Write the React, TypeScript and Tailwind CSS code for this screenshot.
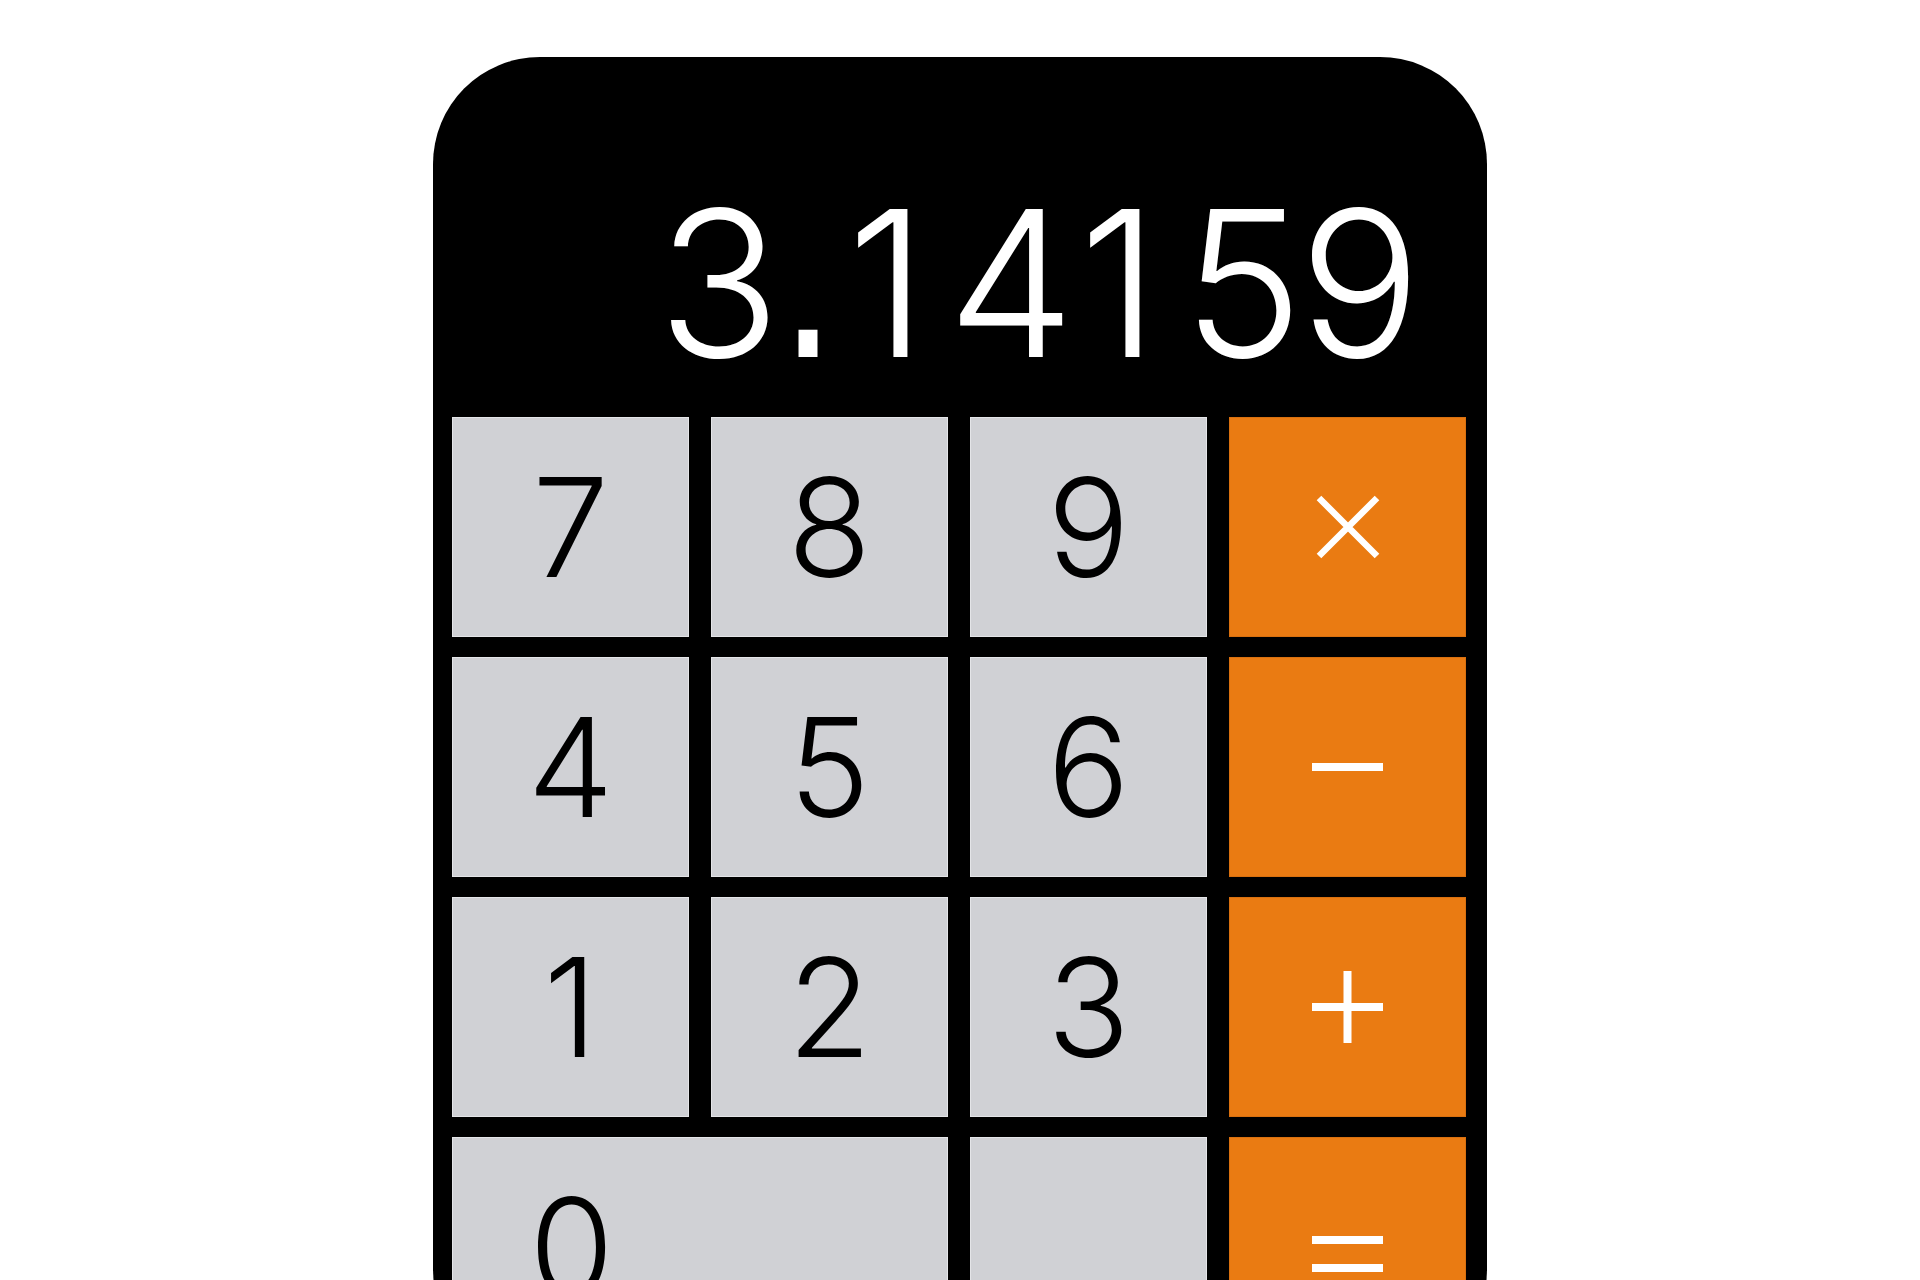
const digitFont = { fontFamily: 'Inter, "Liberation Sans", sans-serif' };

type Op = 'times' | 'minus' | 'plus' | 'equals';

function OpIcon({ op }: { op: Op }) {
  if (op === 'times') {
    return (
      <svg width="64" height="64" viewBox="0 0 64 64" aria-label="×">
        <path d="M3 3 L61 61 M61 3 L3 61" stroke="white" strokeWidth="6.5" />
      </svg>
    );
  }
  if (op === 'minus') {
    return (
      <svg width="71" height="8" viewBox="0 0 71 8" aria-label="−">
        <rect x="0" y="0" width="71" height="8" fill="white" />
      </svg>
    );
  }
  if (op === 'plus') {
    return (
      <svg width="71" height="72" viewBox="0 0 71 72" aria-label="+">
        <rect x="0" y="32" width="71" height="8" fill="white" />
        <rect x="31.5" y="0" width="8" height="72" fill="white" />
      </svg>
    );
  }
  return (
    <svg width="71" height="36" viewBox="0 0 71 36" className="mt-[14px]" aria-label="=">
      <rect x="0" y="0" width="71" height="8" fill="white" />
      <rect x="0" y="28" width="71" height="8" fill="white" />
    </svg>
  );
}

function DigitKey({ label }: { label: string }) {
  return (
    <button
      className="h-[220px] bg-[#d0d1d5] border border-[#e4e5e8] flex items-center justify-center text-black text-[137px] font-light leading-none"
      style={digitFont}
    >
      {label}
    </button>
  );
}

function OpKey({ op }: { op: Op }) {
  return (
    <button className="h-[220px] bg-[#ea7b12] border border-[#d9700f] flex items-center justify-center">
      <OpIcon op={op} />
    </button>
  );
}

function Display() {
  return (
    <div className="h-[360px] flex items-end pb-[29px]">
      <div
        className="flex items-baseline text-white text-[203px] font-light leading-none"
        style={digitFont}
        aria-label="3.14159"
      >
        <span className="w-0 shrink-0 flex justify-center ml-[267px]">3</span>
        <span className="w-0 shrink-0 flex justify-center ml-[89px]">
          <span
            className="inline-block origin-[50%_84.6%] scale-y-[1.28] text-[198px] font-normal"
            style={{ fontFamily: '"Liberation Sans", Arial, sans-serif' }}
          >
            .
          </span>
        </span>
        <span className="w-0 shrink-0 flex justify-center ml-[79px]">1</span>
        <span className="w-0 shrink-0 flex justify-center ml-[124px]">4</span>
        <span className="w-0 shrink-0 flex justify-center ml-[108px]">1</span>
        <span className="w-0 shrink-0 flex justify-center ml-[124px]">5</span>
        <span className="w-0 shrink-0 flex justify-center ml-[117px]">9</span>
      </div>
    </div>
  );
}

export default function App() {
  return (
    <div className="min-h-screen bg-white pt-[57px]">
      <div className="ml-[433px] w-[1054px] bg-black rounded-[107px] pl-[19px] pr-[21px] pb-[20px]">
        <Display />
        <div className="grid grid-cols-4 gap-x-[22px] gap-y-[20px]">
          <DigitKey label="7" />
          <DigitKey label="8" />
          <DigitKey label="9" />
          <OpKey op="times" />
          <DigitKey label="4" />
          <DigitKey label="5" />
          <DigitKey label="6" />
          <OpKey op="minus" />
          <DigitKey label="1" />
          <DigitKey label="2" />
          <DigitKey label="3" />
          <OpKey op="plus" />
          <button
            className="col-span-2 h-[220px] bg-[#d0d1d5] border border-[#e4e5e8] flex items-center text-black text-[137px] font-light leading-none"
            style={digitFont}
          >
            <span className="w-[237px] flex justify-center">0</span>
          </button>
          <DigitKey label="." />
          <OpKey op="equals" />
        </div>
      </div>
    </div>
  );
}
